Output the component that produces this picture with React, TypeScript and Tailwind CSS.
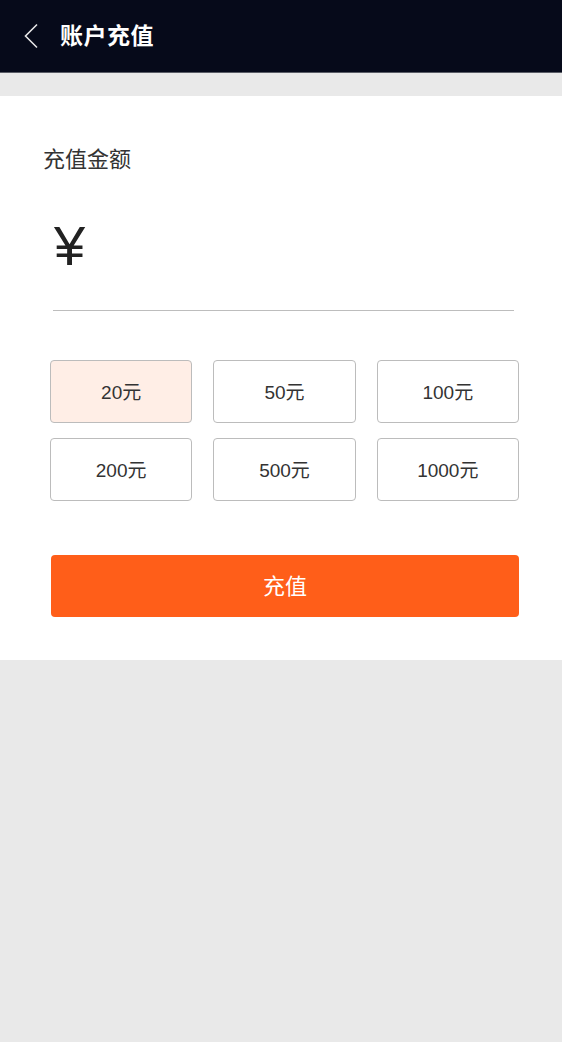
import React, { useState } from 'react';

const amounts = [20, 50, 100, 200, 500, 1000];

const App: React.FC = () => {
  const [selected, setSelected] = useState(20);

  return (
    <div
      className="min-h-[1042px] bg-[#e9e9e9] text-[#333]"
      style={{ fontFamily: '"Liberation Sans", "Noto Sans CJK SC", sans-serif' }}
    >
      {/* Header */}
      <div className="h-[73px] bg-[#060a1a] border-b border-[#5a5d66] flex items-center">
        <button className="w-[60px] h-full flex items-center justify-start pl-[23px]">
          <svg width="16" height="26" viewBox="0 0 16 26" fill="none">
            <path d="M14 1.5 L2.5 13 L14 24.5" stroke="#e6e6e6" strokeWidth="1.6" />
          </svg>
        </button>
        <h1 className="text-white text-[23px] font-bold tracking-[0.5px]">账户充值</h1>
      </div>

      {/* Card */}
      <div className="mt-[23px] bg-white pt-[50px] pb-[43px]">
        <div className="pl-[43px] text-[22px] leading-[28px] text-[#333]">充值金额</div>

        <div className="ml-[53px] mr-[48px] mt-[44px] border-b border-[#bdbdbd] h-[93px]">
          <span className="block text-[56px] leading-[56px] text-[#222] ml-[1px]">¥</span>
        </div>

        <div className="ml-[50px] mr-[43px] mt-[49px] grid grid-cols-3 gap-x-[21px] gap-y-[15px]">
          {amounts.map((a) => (
            <button
              key={a}
              onClick={() => setSelected(a)}
              className={`h-[63px] rounded-[4px] border border-[#bcbcbc] text-[19px] text-[#333] flex items-center justify-center pt-[3px] ${
                selected === a ? 'bg-[#ffeee6]' : 'bg-white'
              }`}
            >
              {a}元
            </button>
          ))}
        </div>

        <div className="ml-[51px] mr-[43px] mt-[54px]">
          <button className="w-full h-[62px] rounded-[4px] bg-[#ff5e19] text-white text-[22px] flex items-center justify-center">
            充值
          </button>
        </div>
      </div>
    </div>
  );
};

export default App;
